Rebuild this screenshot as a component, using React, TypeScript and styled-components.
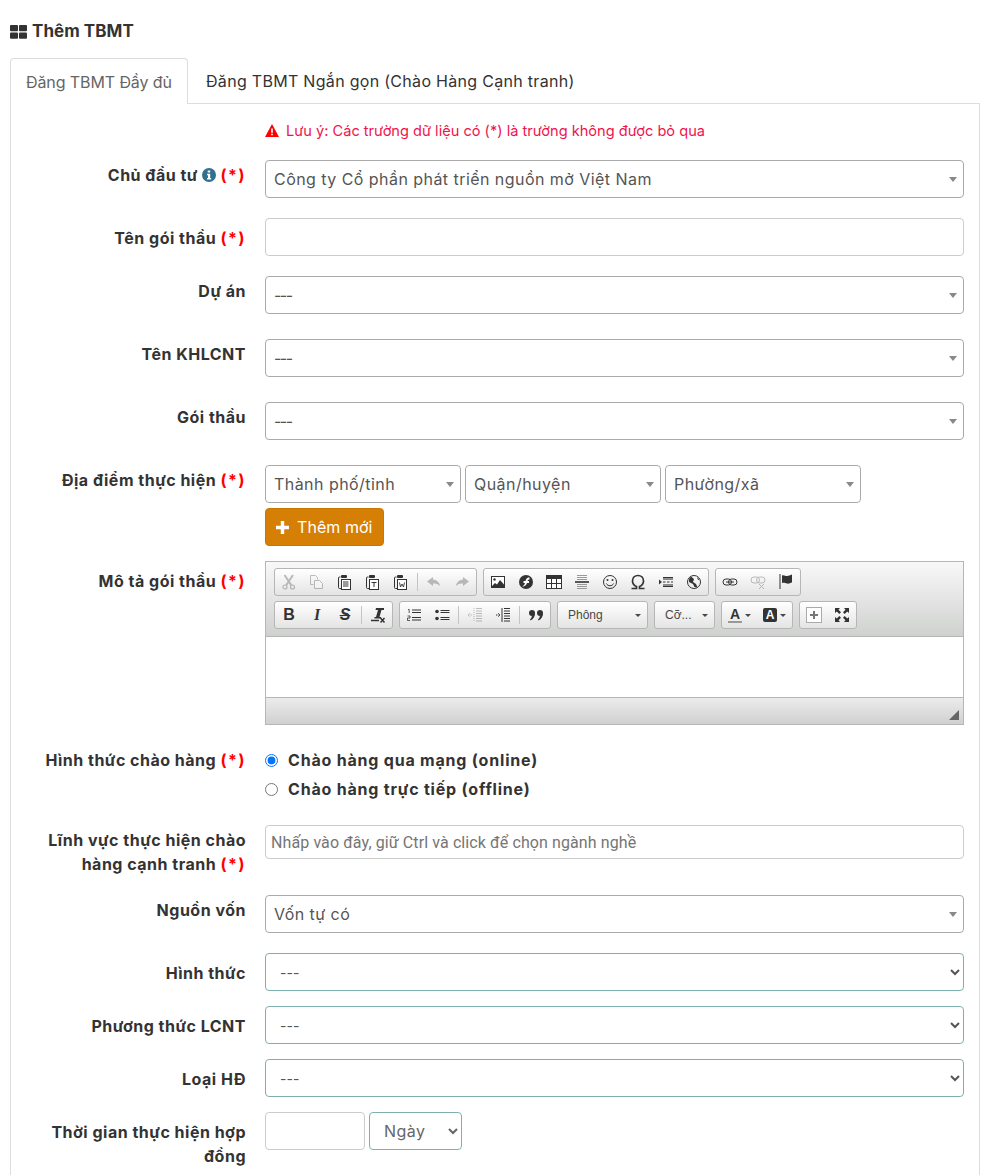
import React from "react";
import styled, { createGlobalStyle } from "styled-components";

const Global = createGlobalStyle`
  html, body { margin: 0; padding: 0; background: #fff; }
  body { font-family: Inter, "Noto Sans", sans-serif; color: #333; }
  * { box-sizing: border-box; }
`;
const Page = styled.div`
  width: 987px; height: 1175px; overflow: hidden; padding: 20px 7px 0 10px;
`;
const Title = styled.h1`
  display: flex; align-items: center; gap: 5px; margin: 0 0 15px; height: 23px;
  font-size: 17px; line-height: 23px; font-weight: 700; color: #333; letter-spacing: 0.05px;
`;
const Tabs = styled.div`display: flex; height: 46px; position: relative; z-index: 1;`;
const Tab = styled.div<{ $active?: boolean }>`
  height: 46px; font-size: 16px; line-height: 47px;
  padding: 0 ${p => (p.$active ? 15 : 18)}px;
  ${p => p.$active
    ? `color:#666;background:#fff;border:1px solid #ddd;border-bottom:0;border-radius:4px 4px 0 0;width:178px;letter-spacing:-0.1px;`
    : `color:#333;letter-spacing:0.3px;`}
`;
const Panel = styled.div`
  border: 1px solid #ddd; border-bottom: 0; margin-top: -1px; height: 1080px; padding: 17px 15px 0 0;
`;
const Notice = styled.div`
  margin-left: 254px; height: 20px; display: flex; align-items: center; gap: 7px; padding-bottom: 1px;
  font-size: 14.6px; color: #f0134d; margin-bottom: 19px;
`;
const Row = styled.div<{ $mb?: number }>`
  display: flex; margin-bottom: ${p => p.$mb ?? 25}px;
`;
const Label = styled.div<{ $pt?: number }>`
  width: 235px; flex: none; text-align: right; font-weight: 700; font-size: 16px;
  line-height: 24px; padding: ${p => p.$pt ?? 3}px 0 0 15px; color: #333; letter-spacing: 0.5px;
`;
const LabelLine = styled.span`display: block;`;
const Req = styled.span`color: #f00; letter-spacing: 1.5px;`;
const Control = styled.div`margin-left: 19px; flex: 1; min-width: 0;`;
const Select2 = styled.div<{ $w?: number }>`
  position: relative; height: 38px; width: ${p => (p.$w ? `${p.$w}px` : "100%")};
  border: 1px solid #aaa; border-radius: 4px; background: #fff;
  font-size: 16px; line-height: 36px; padding-left: 8px; color: #555; letter-spacing: 0.45px;
  &::after {
    content: ""; position: absolute; right: 6px; top: 16px; border-style: solid;
    border-width: 5px 4px 0 4px; border-color: #888 transparent transparent transparent;
  }
`;
const Dashes = styled.span`letter-spacing: -1.5px;`;
const TextInput = styled.input<{ $h?: number; $w?: number }>`
  display: block; height: ${p => p.$h ?? 38}px; width: ${p => (p.$w ? `${p.$w}px` : "100%")};
  border: 1px solid #ccc; border-radius: 4px; padding: 0 5px; outline: none; background: #fff;
  font-family: Roboto, sans-serif; font-size: 16px; color: #555; letter-spacing: 0.1px;
  &::placeholder { color: #757575; opacity: 1; }
`;
const NativeSelect = styled.select<{ $w?: number; $big?: boolean }>`
  display: block; height: 38px; width: ${p => (p.$w ? `${p.$w}px` : "100%")};
  border: 1px solid #7fb0b0; border-radius: 4px; background: #fff; color: ${p => (p.$big ? "#666" : "#555")};
  padding: 0 10px; outline: none;
  font-family: Inter, sans-serif; font-size: ${p => (p.$big ? 16 : 14)}px;
  letter-spacing: ${p => (p.$big ? 0.5 : 0)}px;
`;
const Inline = styled.div`display: flex; gap: 4px;`;
const AddButton = styled.div`
  margin-top: 5px; width: 119px; height: 38px; display: flex; align-items: center; gap: 8px; padding-left: 10px;
  background: #d67f05; border: 1px solid #c97703; border-radius: 4px; color: #fff; font-size: 16px; letter-spacing: 0.05px;
`;
const RadioRow = styled.label`
  display: flex; align-items: center; height: 24px; margin-bottom: 5px;
  font-weight: 700; font-size: 16px; color: #333; letter-spacing: 0.8px;
  input { width: 13px; height: 13px; margin: 0 10px 0 0; accent-color: #0075ff; }
`;

const Editor = styled.div`
  width: 699px; height: 164px; border: 1px solid #b6b6b6; display: flex; flex-direction: column;
  font-family: "Liberation Sans", Arial, sans-serif;
`;
const Toolbar = styled.div`
  height: 75px; flex: none; padding: 6px 0 0 8px; border-bottom: 1px solid #b6b6b6;
  background: linear-gradient(#f8f8f8, #cfd1cf); display: flex; flex-direction: column; gap: 5px;
`;
const TbRow = styled.div`display: flex; gap: 6px; height: 28px;`;
const Group = styled.div`
  display: flex; align-items: center; height: 28px; border: 1px solid #b6b6b6; border-radius: 3px;
  background: linear-gradient(#fff, #e4e4e4);
`;
const Btn = styled.span<{ $off?: boolean; $w?: number }>`
  width: ${p => p.$w ?? 28}px; height: 26px; display: flex; align-items: center; justify-content: center;
  gap: 3px; opacity: ${p => (p.$off ? 0.3 : 1)};
`;
const Sep = styled.span`width: 1px; height: 18px; background: #c4c4c4; margin: 0 2px;`;
const Caret = styled.span`
  border-style: solid; border-width: 3px 3px 0 3px; border-color: #474747 transparent transparent transparent; flex: none;
`;
const Combo = styled(Group)<{ $w: number }>`
  width: ${p => p.$w}px; padding: 0 6px 0 10px; justify-content: space-between; font-size: 12px; color: #484848;
`;
const EditArea = styled.div`flex: 1; background: #fff;`;
const Bottom = styled.div`
  height: 27px; flex: none; border-top: 1px solid #b6b6b6; background: linear-gradient(#ebebeb, #cfd1cf); position: relative;
`;
const Grip = styled.span`
  position: absolute; right: 4px; bottom: 4px; width: 0; height: 0; border-style: solid;
  border-width: 0 0 10px 10px; border-color: transparent transparent #666 transparent;
`;

const I: React.FC<{ children: React.ReactNode; s?: number }> = ({ children, s = 16 }) => (
  <svg width={s} height={s} viewBox="0 0 16 16" fill="none" stroke="none">{children}</svg>
);
const D = "#333";
const Clip: React.FC<{ children?: React.ReactNode }> = ({ children }) => (
  <I>
    <path d="M3.500 3H2.500a1 1 0 0 0-1 1v9.500a1 1 0 0 0 1 1H4" stroke={D} fill="none" />
    <rect x="4" y="1" width="6" height="3" rx="1" fill={D} />
    <rect x="4.500" y="5.500" width="9" height="10" fill="#fff" stroke={D} />
    {children}
  </I>
);
const icons = {
  cut: <I><circle cx="4" cy="13" r="2" stroke={D} strokeWidth="1.200" /><circle cx="11.500" cy="13" r="2" stroke={D} strokeWidth="1.200" /><path d="M3.500 1l7 10.500M12 1L5 11.500" stroke={D} strokeWidth="2" /></I>,
  copy: <I><path d="M1.500 1.500h5l2 2v2M1.500 1.500v9h3" stroke={D} /><path d="M5.500 6.500h5l3 3v5h-8z" stroke={D} fill="#fff" /></I>,
  paste: <Clip><path d="M6 8h5.500M6 10h5.500M6 12h5.500" stroke={D} /></Clip>,
  pasteT: <Clip><path d="M6.500 8.500h5M9 8.500V13" stroke={D} /></Clip>,
  pasteW: <Clip><path d="M6.500 8.500l1 4.500 1.500-3 1.500 3 1-4.500" stroke={D} strokeWidth=".9" /></Clip>,
  undo: <I><path d="M7 3L1 7.500 7 12V9.500c3 0 5 .5 7 2.500-.5-3.500-3-6-7-6.500z" fill="#333" /></I>,
  redo: <I><path d="M9 3l6 4.500L9 12V9.500c-3 0-5 .5-7 2.500.5-3.500 3-6 7-6.500z" fill="#333" /></I>,
  image: <I><rect x="1" y="2" width="14" height="12" fill={D} /><rect x="2" y="3" width="12" height="9" fill="#fff" /><circle cx="4.500" cy="5.500" r="1.200" fill={D} /><path d="M2 12l3-3 2 1.500L10 6l4 4.500V12z" fill={D} /></I>,
  flash: <I><circle cx="8" cy="8" r="7" fill={D} /><path d="M11.500 3.500C8.500 3.500 8 5.500 7.500 7H5.500v2h1.500C6.500 11 5.500 12 4 12.500c3.500 0 4.500-2 5-3.500h2V7H9.500c.3-1 .8-1.500 2-1.500z" fill="#fff" /></I>,
  table: <I><rect x="0.500" y="1.500" width="15" height="13" fill="#fff" stroke={D} /><rect x="0.500" y="1.500" width="15" height="3.500" fill={D} /><path d="M5.500 5v9M10.500 5v9M1 9.500h14" stroke={D} /></I>,
  hr: <I><path d="M3 1.500h10M3 3.500h10M3 5.500h10M3 10.500h10M3 12.500h10M3 14.500h10" stroke="#999" /><path d="M1 8h14" stroke="#222" strokeWidth="1.500" /></I>,
  smile: <I><circle cx="8" cy="8" r="6.500" stroke={D} /><circle cx="5.500" cy="6" r="1" fill={D} /><circle cx="10.500" cy="6" r="1" fill={D} /><path d="M4.500 9.500c1 3 6 3 7 0" stroke={D} /></I>,
  omega: <I><path d="M1.500 14.500H6.500v-2C4 11.500 2.500 9.500 2.500 7c0-3.500 2.500-5.500 5.500-5.500s5.500 2 5.500 5.500c0 2.500-1.500 4.500-4 5.500v2h5" stroke={D} strokeWidth="1.700" /></I>,
  pagebreak: <I><path d="M1 5.500l3 2.500-3 2.500z" fill={D} /><path d="M5 3h10v1.500H5zM5 11.500h10V13H5z" fill={D} /><path d="M5 8h2.500M9 8h2.500M13 8h2" stroke={D} /><path d="M5 5.500h10M5 10.500h10" stroke="#888" /></I>,
  globe: <I><circle cx="8" cy="8" r="6.500" stroke={D} /><path d="M5 2.500L8 5l-1 3 3 2 1.500 3.500-3-.5-1.500-3-4-2 0-3zM11 3l2.500 2.500-1.500.500z" fill={D} /></I>,
  link: <I><rect x="1" y="5" width="8.500" height="6" rx="3" stroke={D} /><rect x="6.500" y="5" width="8.500" height="6" rx="3" stroke={D} /><path d="M4 8h8" stroke={D} /></I>,
  unlink: <I><rect x="1" y="3" width="8.500" height="6" rx="3" stroke={D} /><rect x="6.500" y="3" width="8.500" height="6" rx="3" stroke={D} /><path d="M9 10l5 5M14 10l-5 5" stroke={D} /></I>,
  flag: <I><path d="M2 0v15" stroke={D} strokeWidth="1" /><path d="M4 1.500c2-1 3 .5 5 .5s3-1 5-1.500v8c-2 .5-3 1.500-5 1S6 8.500 4 9z" fill={D} /></I>,
  clear: <I><path d="M6 1h8v2h-2.500L9.500 10h1.500v1.500H4.500V10H6L8 3H5.500z" fill={D} /><path d="M1 13.500h8" stroke={D} strokeWidth="1.500" /><path d="M10.500 11l4 4.500M14.500 11l-4 4.500" stroke={D} strokeWidth="1.500" /></I>,
  ol: <I><path d="M2 2.500h1.200v3.500M1.500 9h2.500v2H1.500v2.500H4" stroke={D} strokeWidth=".8" /><path d="M6 3h9M6 5.500h9M6 10.500h9M6 13h9" stroke={D} /></I>,
  ul: <I><circle cx="3" cy="4.500" r="1.800" fill={D} /><circle cx="3" cy="11.500" r="1.800" fill={D} /><path d="M6.500 3.500h9M6.500 5.500h9M6.500 10.500h9M6.500 12.500h9" stroke={D} /></I>,
  outdent: <I><path d="M9 1.500h6M9 4h6M9 6.500h6M9 9h6M9 11.500h6M9 14h6" stroke="#333" /><path d="M7 1v14" stroke="#333" strokeDasharray="1 1" /><path d="M1 8h4M3 6l-2 2 2 2" stroke="#333" strokeDasharray="1 .6" /></I>,
  indent: <I><path d="M9 1.500h6M9 4h6M9 6.500h6M9 9h6M9 11.500h6M9 14h6" stroke="#333" /><path d="M7 1v14" stroke="#333" /><path d="M1 8h4M3 6l2 2-2 2" stroke="#333" strokeDasharray="1 .6" /></I>,
  quote: <I><circle cx="4" cy="6" r="3" fill={D} /><circle cx="12" cy="6" r="3" fill={D} /><path d="M7 6c0 3.500-1.500 6-4.500 7.500L2 12.500c1-.9 1.700-2 1.900-3.500zM15 6c0 3.500-1.500 6-4.500 7.500l-.5-1c1-.9 1.700-2 1.900-3.500z" fill={D} /></I>,
  maximize: <I><rect x="0.500" y="0.500" width="15" height="15" fill="#fff" stroke="#aaa" /><path d="M8 4v8M4 8h8" stroke="#777" strokeWidth="2" /></I>,
  full: <I><path d="M1 1h5L4.500 2.800 7 5.300 5.300 7 2.800 4.500 1 6zM15 1v5l-1.800-1.500L10.700 7 9 5.300l2.500-2.500L10 1zM1 15v-5l1.800 1.500L5.300 9 7 10.700l-2.500 2.500L6 15zM15 15h-5l1.500-1.800L9 10.700 10.700 9l2.500 2.500L15 10z" fill={D} /></I>,
};
const Letter = styled.span<{ $serif?: boolean; $i?: boolean; $s?: boolean }>`
  font: ${p => (p.$i ? "italic " : "")}700 16px ${p => (p.$serif ? '"Liberation Serif"' : '"Liberation Sans"')}, sans-serif;
  color: #333; text-decoration: ${p => (p.$s ? "line-through" : "none")};
`;
const TextColor = styled.span`
  font: 700 14px/13px "Liberation Sans", sans-serif; color: #333; border-bottom: 2px solid #999; width: 14px; text-align: center;
`;
const BgColor = styled.span`
  font: 700 12px/14px "Liberation Sans", sans-serif; color: #fff; background: #333; border-radius: 2px; width: 14px; height: 14px; text-align: center;
`;

const Toolbars = () => (
  <Toolbar>
    <TbRow>
      <Group>
        <Btn $off>{icons.cut}</Btn><Btn $off>{icons.copy}</Btn><Btn>{icons.paste}</Btn><Btn>{icons.pasteT}</Btn><Btn>{icons.pasteW}</Btn>
        <Sep /><Btn $off>{icons.undo}</Btn><Btn $off>{icons.redo}</Btn>
      </Group>
      <Group>
        <Btn>{icons.image}</Btn><Btn>{icons.flash}</Btn><Btn>{icons.table}</Btn><Btn>{icons.hr}</Btn>
        <Btn>{icons.smile}</Btn><Btn>{icons.omega}</Btn><Btn>{icons.pagebreak}</Btn><Btn>{icons.globe}</Btn>
      </Group>
      <Group>
        <Btn>{icons.link}</Btn><Btn $off>{icons.unlink}</Btn><Btn>{icons.flag}</Btn>
      </Group>
    </TbRow>
    <TbRow>
      <Group>
        <Btn><Letter>B</Letter></Btn><Btn><Letter $serif $i>I</Letter></Btn><Btn><Letter $i $s>S</Letter></Btn>
        <Sep /><Btn>{icons.clear}</Btn>
      </Group>
      <Group>
        <Btn>{icons.ol}</Btn><Btn>{icons.ul}</Btn><Sep /><Btn $off>{icons.outdent}</Btn><Btn>{icons.indent}</Btn><Sep /><Btn>{icons.quote}</Btn>
      </Group>
      <Combo $w={91}><span>Phông</span><Caret /></Combo>
      <Combo $w={61}><span>Cỡ...</span><Caret /></Combo>
      <Group>
        <Btn $w={35}><TextColor>A</TextColor><Caret /></Btn>
        <Btn $w={35}><BgColor>A</BgColor><Caret /></Btn>
      </Group>
      <Group>
        <Btn>{icons.maximize}</Btn><Btn>{icons.full}</Btn>
      </Group>
    </TbRow>
  </Toolbar>
);

const R = () => <Req>(*)</Req>;
const Gridicon = () => (
  <svg width="17" height="14" viewBox="0 0 17 14" fill="#333">
    <rect x="0" y="0" width="8" height="6.300" rx="1" /><rect x="9" y="0" width="8" height="6.300" rx="1" />
    <rect x="0" y="7.500" width="8" height="6.300" rx="1" /><rect x="9" y="7.500" width="8" height="6.300" rx="1" />
  </svg>
);
const Warn = () => (
  <svg width="14" height="13" viewBox="0 0 14 13"><path d="M7 0l7 13H0z" fill="#f00" /><path d="M6.200 4.500h1.600v4.300H6.200zM6.200 9.800h1.600v1.500H6.200z" fill="#fff" /></svg>
);
const Info = () => (
  <svg width="14" height="14" viewBox="0 0 14 14" style={{ verticalAlign: -1 }}>
    <circle cx="7" cy="7" r="7" fill="#31708f" /><path d="M5.700 2.500h2.500v2H5.700zM5 5.800h3.200v4.200h1v1.500H5V10h1V7.200H5z" fill="#fff" />
  </svg>
);
const Plus = () => (
  <svg width="13" height="13" viewBox="0 0 13 13" fill="#fff"><path d="M4.800 0h3.400v4.800H13v3.400H8.200V13H4.800V8.200H0V4.800h4.800z" /></svg>
);

export default function App() {
  return (
    <Page>
      <Global />
      <Title><Gridicon />Thêm TBMT</Title>
      <Tabs>
        <Tab $active>Đăng TBMT Đầy đủ</Tab>
        <Tab>Đăng TBMT Ngắn gọn (Chào Hàng Cạnh tranh)</Tab>
      </Tabs>
      <Panel>
        <Notice><Warn />Lưu ý: Các trường dữ liệu có (*) là trường không được bỏ qua</Notice>
        <Row $mb={20}><Label>Chủ đầu tư <Info /> <R /></Label><Control><Select2>Công ty Cổ phần phát triển nguồn mở Việt Nam</Select2></Control></Row>
        <Row $mb={20}><Label $pt={8}>Tên gói thầu <R /></Label><Control><TextInput /></Control></Row>
        <Row><Label>Dự án</Label><Control><Select2><Dashes>---</Dashes></Select2></Control></Row>
        <Row><Label>Tên KHLCNT</Label><Control><Select2><Dashes>---</Dashes></Select2></Control></Row>
        <Row><Label>Gói thầu</Label><Control><Select2><Dashes>---</Dashes></Select2></Control></Row>
        <Row $mb={15}>
          <Label>Địa điểm thực hiện <R /></Label>
          <Control>
            <Inline>
              <Select2 $w={196}>Thành phố/tỉnh</Select2>
              <Select2 $w={196}>Quận/huyện</Select2>
              <Select2 $w={196}>Phường/xã</Select2>
            </Inline>
            <AddButton><Plus />Thêm mới</AddButton>
          </Control>
        </Row>
        <Row $mb={23}><Label $pt={8}>Mô tả gói thầu <R /></Label><Control><Editor><Toolbars /><EditArea /><Bottom><Grip /></Bottom></Editor></Control></Row>
        <Row $mb={19}>
          <Label $pt={0}>Hình thức chào hàng <R /></Label>
          <Control>
            <RadioRow><input type="radio" name="m" defaultChecked />Chào hàng qua mạng (online)</RadioRow>
            <RadioRow><input type="radio" name="m" />Chào hàng trực tiếp (offline)</RadioRow>
          </Control>
        </Row>
        <Row $mb={19}>
          <Label>
            <LabelLine>Lĩnh vực thực hiện chào</LabelLine>
            <LabelLine>hàng cạnh tranh <R /></LabelLine>
          </Label>
          <Control><TextInput $h={34} placeholder="Nhấp vào đây, giữ Ctrl và click để chọn ngành nghề" /></Control>
        </Row>
        <Row $mb={20}><Label>Nguồn vốn</Label><Control><Select2>Vốn tự có</Select2></Control></Row>
        <Row $mb={15}><Label $pt={8}>Hình thức</Label><Control><NativeSelect><option>---</option></NativeSelect></Control></Row>
        <Row $mb={15}><Label $pt={8}>Phương thức LCNT</Label><Control><NativeSelect><option>---</option></NativeSelect></Control></Row>
        <Row $mb={15}><Label $pt={8}>Loại HĐ</Label><Control><NativeSelect><option>---</option></NativeSelect></Control></Row>
        <Row>
          <Label $pt={8}>Thời gian thực hiện hợp đồng</Label>
          <Control>
            <Inline>
              <TextInput $w={100} />
              <NativeSelect $w={93} $big><option>Ngày</option></NativeSelect>
            </Inline>
          </Control>
        </Row>
      </Panel>
    </Page>
  );
}
